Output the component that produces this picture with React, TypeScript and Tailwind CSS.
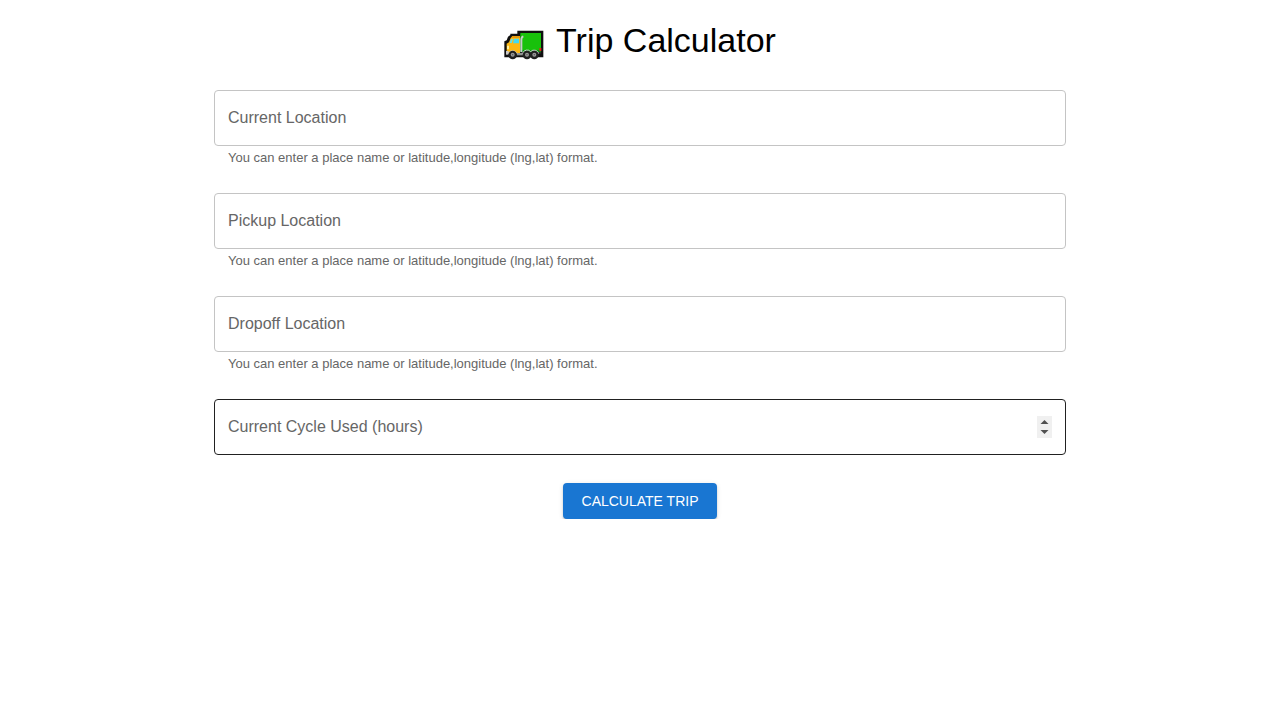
import { useRef, useState } from "react";

type FieldProps = {
  id: string;
  label: string;
  helper?: string;
  type?: "text" | "number";
  active?: boolean;
};

function TruckIcon() {
  return (
    <svg viewBox="12 28 120 90" className="mt-2.5 h-[30px] w-10 shrink-0" aria-hidden="true">
      <path d="M52 30H130V110H13V62L20 59L24 48L31 43V39H52Z" fill="#101010" />
      <path d="M61 37H123V93H61Z" fill="#18c10b" />
      <path d="M61 88H123V94H61Z" fill="#0b8e10" />
      <path d="M61 94H123V99H61Z" fill="#2b2b2b" />
      <path d="M20 69L27 65L32 52L39 46H60V99H20Z" fill="#fdb813" />
      <path d="M36 46H60V52H34Z" fill="#e99a0b" />
      <path d="M42 54H57V68H39Z" fill="#42d9f5" />
      <path d="M33 55H39L35 67H29Z" fill="#5ee0f0" />
      <path d="M21 75H27V86H21Z" fill="#fff1a0" />
      <path d="M18 91H26V102H18Z" fill="#c9c9c9" />
      <path d="M70 47Q64 49 64 57V94" fill="none" stroke="#c8cdca" strokeWidth="6" />
      <path d="M50 97H72V104H50Z" fill="#8f9391" />
      <path d="M118 82H124V91H118Z" fill="#e32418" />
      <path d="M25 99A14 14 0 0 1 51 99M68 98A14 14 0 0 1 92 93A14 14 0 0 1 116 99" fill="none" stroke="#d8d8d8" strokeWidth="3" />
      {[38, 81, 103].map((x) => (
        <g key={x}>
          <circle cx={x} cy="103" r="13" fill="#202020" />
          <circle cx={x} cy="102" r="6" fill="#969696" />
          <circle cx={x} cy="102" r="2" fill="#505050" />
        </g>
      ))}
    </svg>
  );
}

function Field({ id, label, helper, type = "text", active = false }: FieldProps) {
  const [value, setValue] = useState("");
  const input = useRef<HTMLInputElement>(null);
  const border = active ? "border-[#212121]" : "border-[#c4c4c4] hover:border-[#212121]";

  const step = (amount: number) => {
    setValue(String((Number(value) || 0) + amount));
    input.current?.focus();
  };

  return (
    <div>
      <div className={`relative flex items-center rounded border px-[13px] py-4 focus-within:border-[#1976d2] ${border}`}>
        <input
          ref={input}
          id={id}
          type={type}
          value={value}
          onChange={(event) => setValue(event.target.value)}
          placeholder=" "
          aria-describedby={helper ? `${id}-help` : undefined}
          className="peer h-[22px] w-full min-w-0 appearance-none bg-transparent text-base text-[#212121] outline-none [&::-webkit-inner-spin-button]:appearance-none"
        />
        <label
          htmlFor={id}
          className="pointer-events-none absolute -top-2 left-2 bg-white px-1 text-xs text-[#666666] peer-placeholder-shown:top-[15px] peer-placeholder-shown:left-[9px] peer-placeholder-shown:bg-transparent peer-placeholder-shown:text-base"
        >
          {label}
        </label>
        {type === "number" && (
          <div className="flex w-[15px] shrink-0 flex-col bg-[#f0f0f0]">
            <button
              type="button"
              aria-label="Increase hours"
              onClick={() => step(1)}
              className="flex h-[11px] items-center justify-center"
            >
              <svg viewBox="0 0 15 11" className="h-[11px] w-[15px]" aria-hidden="true">
                <path d="M3.5 8L7.5 4L11.5 8Z" fill="#505050" />
              </svg>
            </button>
            <button
              type="button"
              aria-label="Decrease hours"
              onClick={() => step(-1)}
              className="flex h-[11px] items-center justify-center"
            >
              <svg viewBox="0 0 15 11" className="h-[11px] w-[15px]" aria-hidden="true">
                <path d="M3.5 3L7.5 7L11.5 3Z" fill="#505050" />
              </svg>
            </button>
          </div>
        )}
      </div>
      {helper && (
        <p id={`${id}-help`} className="mx-3.5 mt-0.5 text-[13px] leading-5 text-[#666666]">
          {helper}
        </p>
      )}
    </div>
  );
}

const placeHelp = "You can enter a place name or latitude,longitude (lng,lat) format.";

export default function App() {
  return (
    <main className="mx-auto max-w-[900px] bg-white px-6 pt-5 font-['Liberation_Sans',Arial,sans-serif]">
      <h1 className="flex items-center justify-center gap-3 text-[34px] leading-10 text-black">
        <TruckIcon />
        Trip Calculator
      </h1>
      <form className="mt-[30px] flex flex-col gap-[25px]" onSubmit={(event) => event.preventDefault()}>
        <Field id="current" label="Current Location" helper={placeHelp} />
        <Field id="pickup" label="Pickup Location" helper={placeHelp} />
        <Field id="dropoff" label="Dropoff Location" helper={placeHelp} />
        <Field id="cycle" label="Current Cycle Used (hours)" type="number" active />
        <button
          type="submit"
          className="mt-[3px] h-9 min-w-[154px] self-center rounded bg-[#1976d2] px-4 text-sm text-white uppercase shadow-[0_3px_1px_-2px_rgba(0,0,0,0.2),0_2px_2px_0_rgba(0,0,0,0.14),0_1px_5px_0_rgba(0,0,0,0.12)] hover:bg-[#1565c0]"
        >
          Calculate Trip
        </button>
      </form>
    </main>
  );
}
